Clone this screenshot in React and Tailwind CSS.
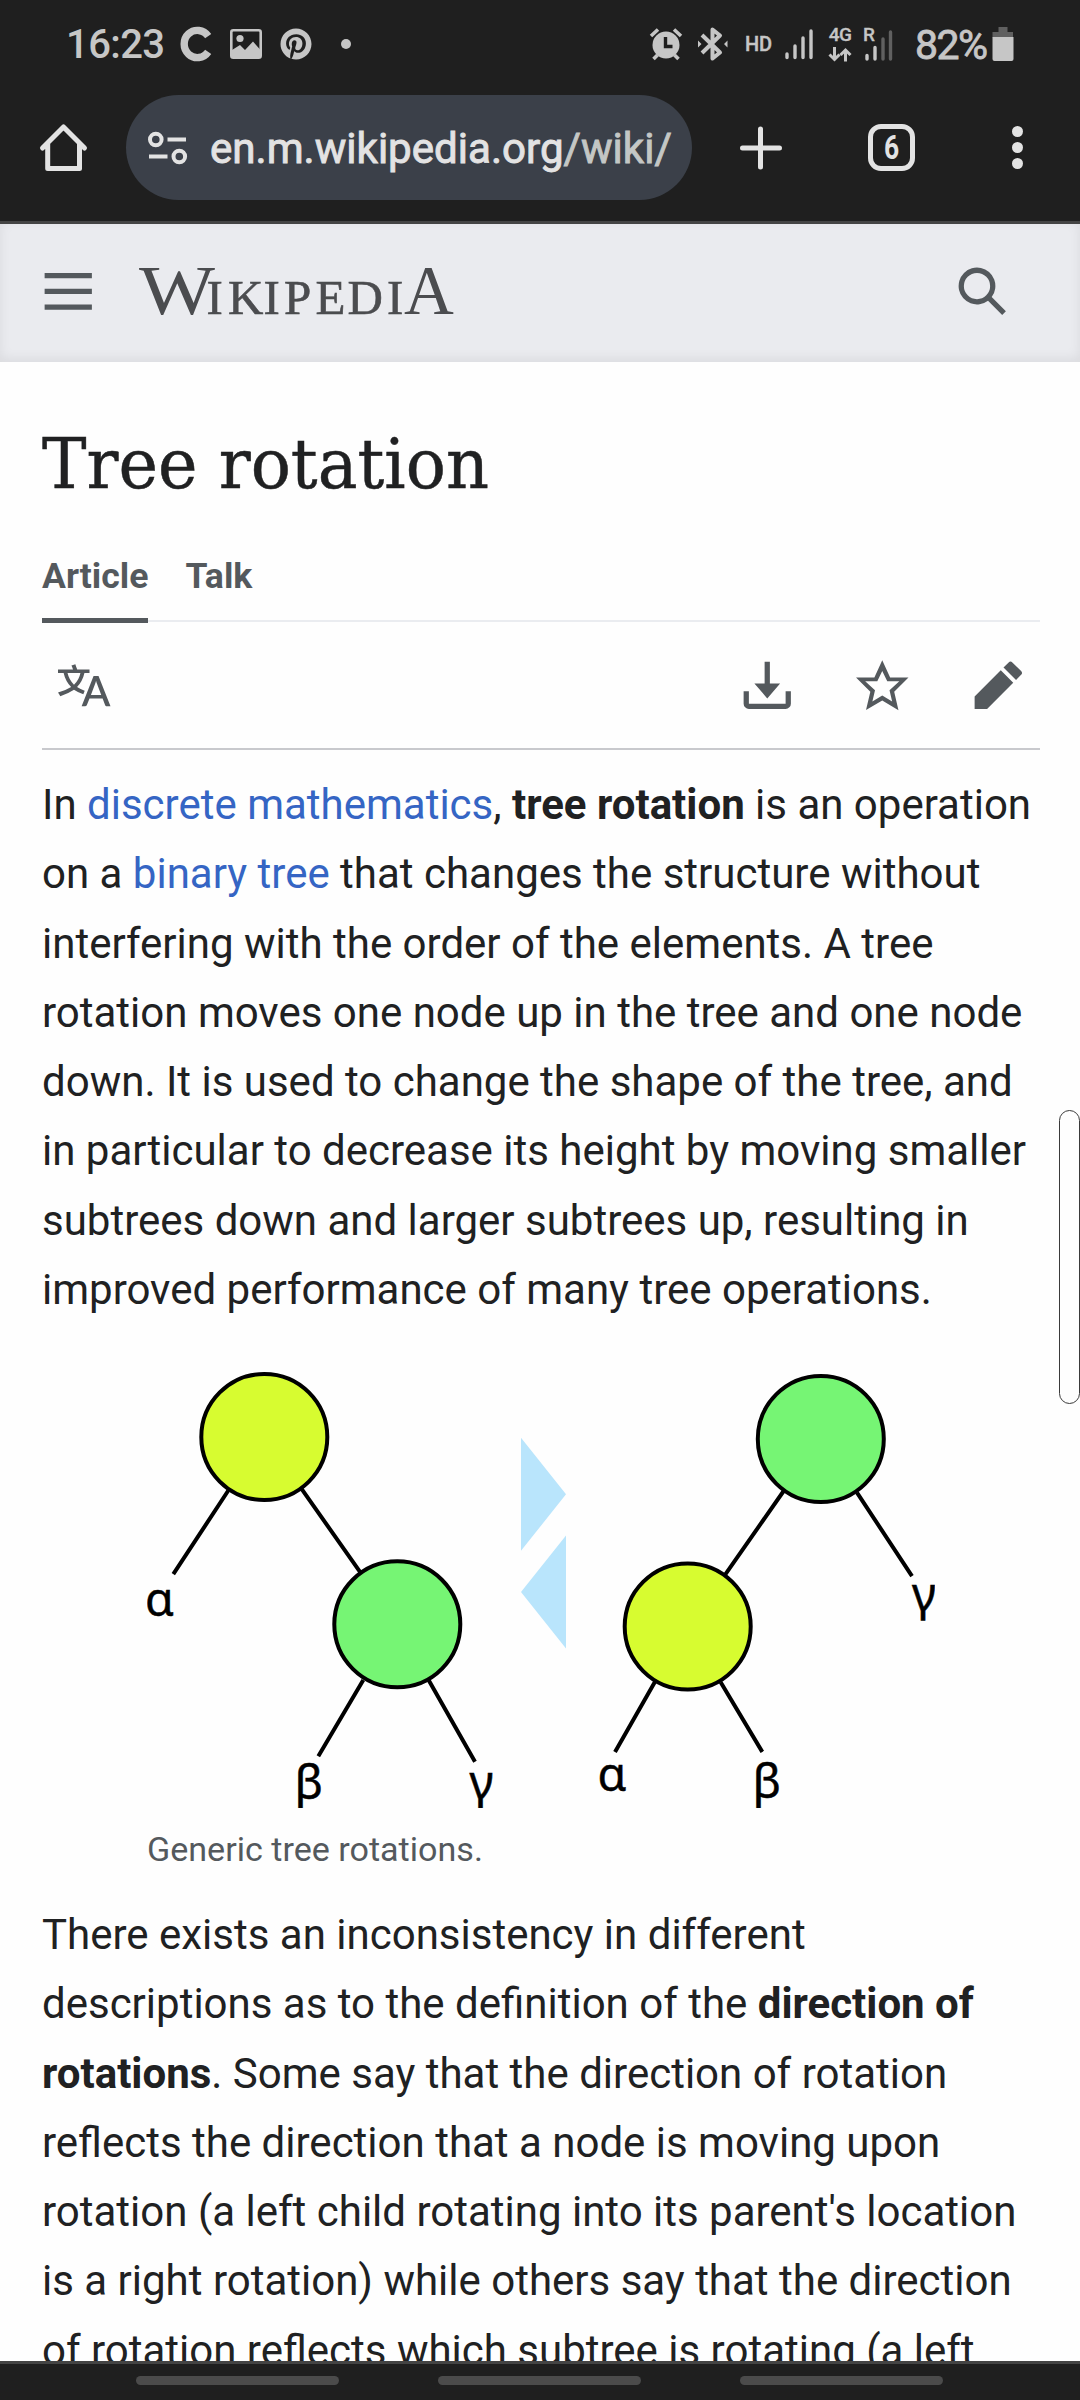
import React from "react";
import { FaPinterest } from "react-icons/fa";

function StatusBar() {
  return (
    <div className="flex h-[88px] shrink-0 items-center text-[#c6c6c6]">
      <div className="ml-[66px] w-[96px] whitespace-nowrap pt-[2px] text-[40px] leading-[48px] font-medium tracking-[-0.6px]">16:23</div>
      <svg className="ml-[17px] h-[36px] w-[34px]" viewBox="0 0 34 36" fill="none">
        <path d="M29.2 10.2A13.2 13.6 0 1 0 29.2 25.8" stroke="currentColor" strokeWidth="7.4" />
      </svg>
      <svg className="ml-[17px] h-[30px] w-[32px]" viewBox="0 0 32 30">
        <rect x="1.3" y="1.3" width="29.4" height="27.4" rx="2" fill="none" stroke="currentColor" strokeWidth="2.6" />
        <circle cx="10" cy="9.5" r="3.6" fill="currentColor" />
        <path d="M2 21l8-5 5 5 8-8.500 8 9V28H2z" fill="currentColor" />
      </svg>
      <FaPinterest className="ml-[18px] size-[32px]" />
      <div className="ml-[29px] size-[10px] rounded-full bg-[#c6c6c6]" />
      <svg className="ml-[298px] h-[34px] w-[34px]" viewBox="0 0 34 34" fill="none" stroke="currentColor">
        <circle cx="17" cy="18" r="13.500" fill="currentColor" stroke="none" />
        <path d="M2 9l7-6.500M32 9l-7-6.500" strokeWidth="3.600" />
        <path d="M4.500 32l4-4M29.500 32l-4-4" strokeWidth="3.600" />
        <path d="M16.500 10v9.500h7" stroke="#1f1f1f" strokeWidth="3.400" />
      </svg>
      <svg className="ml-[14px] h-[36px] w-[32px]" viewBox="0 0 32 36" fill="none" stroke="currentColor" strokeWidth="4">
        <path d="M5 9l18 17.500-7.500 6v-29L23 9.500 5 27" strokeLinejoin="round" />
        <path d="M1 14.500L4.500 18l-3.500 3.500zM30.500 14.500L27 18l3.500 3.500z" fill="currentColor" stroke="none" />
      </svg>
      <div className="ml-[16px] w-[28px] text-[20px] leading-[26px] font-medium tracking-[-0.2px] [-webkit-text-stroke:0.4px_currentColor]">HD</div>
      <svg className="ml-[12px] h-[32px] w-[28px]" viewBox="0 0 28 32" stroke="currentColor" strokeWidth="3.400" strokeLinecap="round">
        <path d="M2 26v3.500M10 18v11.500M18 10v19.500M26 3v26.500" />
      </svg>
      <div className="ml-[14px] flex w-[26px] flex-col items-center">
        <div className="-mt-[4px] text-[19px] leading-[24px] font-medium tracking-[-0.5px] [-webkit-text-stroke:0.3px_currentColor]">4G</div>
        <svg className="h-[15px] w-[24px]" viewBox="0 0 24 15" fill="none" stroke="currentColor" strokeWidth="3">
          <path d="M6.500 0v12M1.500 7.500l5 5 5-5M17.500 14.500V3M12.500 8l5-5 5 5" />
        </svg>
      </div>
      <svg className="ml-[10px] h-[44px] w-[32px]" viewBox="0 -6 32 44" strokeWidth="3.400" strokeLinecap="round">
        <text x="0" y="12.500" fontSize="19" fontWeight="500" fill="currentColor" stroke="currentColor" style={{ strokeWidth: 0.3 }}>R</text>
        <path d="M4 27.500v3.500M12 19.500v11.500" stroke="currentColor" />
        <path d="M20 11v20M27.500 4v27" stroke="#606060" />
      </svg>
      <div className="ml-[20px] w-[74px] whitespace-nowrap pt-[2px] text-[41px] leading-[48px] tracking-[-1.6px] [-webkit-text-stroke:0.8px_currentColor]">82%</div>
      <svg className="ml-[3px] h-[34px] w-[22px]" viewBox="0 0 22 34">
        <path d="M6.500 0h9v5H21v5.500H0.500V5h6z" fill="#606060" />
        <path d="M0.500 10h21v22a2 2 0 0 1-2 2h-17a2 2 0 0 1-2-2z" fill="currentColor" />
      </svg>
    </div>
  );
}

function BrowserBar() {
  return (
    <div className="flex h-[133px] shrink-0 items-start pt-[7px] text-[#e3e3e3]">
      <svg className="mt-[27px] ml-[38px] h-[52px] w-[52px]" viewBox="0 0 52 52" fill="none" stroke="currentColor" strokeWidth="5" strokeLinecap="round" strokeLinejoin="round">
        <path d="M4.500 26L25.500 5 46.500 26M9.700 22v24.500h31.800V22" />
      </svg>
      <div className="ml-[36px] flex h-[105px] w-[566px] items-center overflow-hidden rounded-full bg-[#3b4049] pr-[20px] pl-[22px]">
        <svg className="h-[34px] w-[40px] shrink-0" viewBox="0 0 40 34" fill="none" stroke="currentColor" strokeWidth="4">
          <circle cx="7.800" cy="8.500" r="5.800" />
          <path d="M19.500 8.500H38M1 25.500h18.500" />
          <circle cx="31.300" cy="25.500" r="5.800" />
        </svg>
        <div className="ml-[22px] flex-1 overflow-hidden pt-[3px] text-[42.1px] leading-[60px] whitespace-nowrap [-webkit-text-stroke:0.9px_currentColor]">
          en.m.wikipedia.org<span className="text-[#c4c7c5]">/wiki/</span>
        </div>
      </div>
      <svg className="mt-[31px] ml-[47px] size-[44px]" viewBox="0 0 44 44" stroke="currentColor" strokeWidth="5" strokeLinecap="round">
        <path d="M21.500 3v38M3.500 22h37" />
      </svg>
      <div className="mt-[29px] ml-[85px] flex size-[47px] items-center justify-center rounded-[13px] border-5 border-[#e3e3e3] text-[33px] leading-none font-bold">
        <span className="scale-x-80">6</span>
      </div>
      <div className="mt-[31px] ml-[97px] flex flex-col gap-[5px]">
        <div className="size-[11px] rounded-full bg-[#e3e3e3]" />
        <div className="size-[11px] rounded-full bg-[#e3e3e3]" />
        <div className="size-[11px] rounded-full bg-[#e3e3e3]" />
      </div>
    </div>
  );
}

function Icon({ className, children }) {
  return (
    <svg className={className} viewBox="0 0 20 20" fill="currentColor">
      {children}
    </svg>
  );
}

function WikiHeader() {
  return (
    <header className="flex h-[138px] shrink-0 items-start bg-[#eaebef] text-[#54595d] shadow-[inset_0_-3px_12px_rgba(0,0,0,0.07)]">
      <Icon className="mt-[41px] ml-[42px] size-[52.5px]">
        <path d="M1 3v2h18V3zm0 8h18V9H1zm0 6h18v-2H1z" />
      </Icon>
      <svg className="mt-[16px] ml-[40px] h-[100px] w-[326px]" viewBox="0 -20 326 100" fill="#4b4c4f" fontFamily="'Liberation Serif', serif">
        <text x="4" y="53.500" fontSize="69" textLength="76" lengthAdjust="spacingAndGlyphs">W</text>
        <text x="71.500 93 128.500 149 180.500 212.500 252" y="53.500" fontSize="49" stroke="#4b4c4f" strokeWidth="0.6">IKIPEDI</text>
        <text x="269" y="53.500" fontSize="69">A</text>
      </svg>
      <Icon className="mt-[41px] mr-[72px] ml-auto size-[52.5px]">
        <path d="M12.200 13.600a7 7 0 1 1 1.400-1.400l5.400 5.400-1.400 1.400zM3 8a5 5 0 1 0 10 0A5 5 0 0 0 3 8" />
      </Icon>
    </header>
  );
}

function PageActions() {
  return (
    <div className="flex h-[128px] items-start border-b-2 border-[#c8c9cd] pt-[36.5px] text-[#54595d]">
      <Icon className="ml-[16px] size-[52.5px]">
        <path d="M20 18h-1.440a.6.6 0 0 1-.4-.12.8.8 0 0 1-.23-.31L17 15h-5l-1 2.540a.8.8 0 0 1-.22.3.6.6 0 0 1-.4.14H9l4.550-11.470h1.890zm-3.530-4.310L14.890 9.500a12 12 0 0 1-.39-1.240q-.09.37-.19.69l-.19.56-1.580 4.190zm-6.300-1.580a13.400 13.400 0 0 1-2.910-1.410 11.460 11.460 0 0 0 2.810-5.370H12V4H7.310a4 4 0 0 0-.2-.56C6.870 2.790 6.600 2 6.600 2l-1.470.5s.4.89.6 1.500H0v1.330h2.150A11.230 11.230 0 0 0 5 10.700a17.200 17.200 0 0 1-5 2.100q.56.82.87 1.380a23.300 23.300 0 0 0 5.220-2.510 15.600 15.600 0 0 0 3.560 1.770zM3.630 5.330h4.910a8.100 8.100 0 0 1-2.450 4.450 9.100 9.100 0 0 1-2.460-4.450" />
      </Icon>
      <Icon className="ml-auto size-[52.5px]">
        <path d="M17 12.300V17H3v-4.700H1V17a2 2 0 0 0 2 2h14a2 2 0 0 0 2-2v-4.700z" />
        <path d="M10 15l4.900-5.700H11V1H9v8.300H5.100z" />
      </Icon>
      <Icon className="ml-[63px] size-[52.5px]">
        <path d="M20 7h-7L10 .5 7 7H0l5.460 5.470-1.640 7 6.180-3.700 6.180 3.730-1.630-7zm-10 6.900-3.760 2.270 1-4.280L3.500 8.500h4.610L10 4.600l1.900 3.900h4.600l-3.730 3.400 1 4.280z" />
      </Icon>
      <Icon className="mr-[16px] ml-[63px] size-[52.5px]">
        <path d="m16.770 8 1.940-2a1 1 0 0 0 0-1.410l-3.340-3.300a1 1 0 0 0-1.410 0L12 3.230zM1 14.250V19h4.750l9.960-9.960-4.750-4.750z" />
      </Icon>
    </div>
  );
}

function RotationDiagram() {
  return (
    <svg className="block h-[450px] w-[788px]" viewBox="147 1358 788 450" fill="none" stroke="#000" strokeWidth="4">
      <path d="M228.300 1490.500L173.300 1574.200M300.700 1487.700L360.700 1572.800M363.300 1679.900L318.300 1756.300M428.300 1679.500L475 1761.800" />
      <path d="M784 1490.500L725 1574.900M857 1492.600L912 1576.200M655.700 1680.600L615 1751.900M720.700 1682.300L762.300 1751.900" />
      <g fill="#d7fc30">
        <circle cx="264.300" cy="1437" r="63" />
        <circle cx="687.700" cy="1626.500" r="63" />
      </g>
      <g fill="#76f574">
        <circle cx="397.300" cy="1624.300" r="63" />
        <circle cx="820.800" cy="1439" r="63" />
      </g>
      <path d="M521 1437.800L566 1494.300L521 1550.800zM566 1535.600L521 1592.100L566 1648.600z" fill="#b9e5fc" stroke="none" />
      <g fill="#000" strokeWidth="0.5" fontSize="46.5" fontFamily="'Noto Sans', sans-serif">
        <text x="145" y="1615.500">α</text>
        <text x="294.500" y="1798.500">β</text>
        <text x="469.500" y="1798.500">γ</text>
        <text x="597.500" y="1790.500">α</text>
        <text x="752.500" y="1797.500">β</text>
        <text x="912" y="1611">γ</text>
      </g>
    </svg>
  );
}

export default function App() {
  return (
    <div className="relative flex h-[2400px] w-[1080px] flex-col overflow-hidden bg-[#1f1f1f] font-['Roboto',sans-serif]">
      <StatusBar />
      <BrowserBar />
      <div className="h-[3px] shrink-0 bg-[#444444]" />
      <WikiHeader />
      <main className="min-h-0 flex-1 overflow-hidden bg-[#fefefe] px-[42px] pr-[40px] text-[#202122]">
        <h1 className="mt-[54px] h-[96px] origin-left scale-x-[0.954] whitespace-nowrap font-['DejaVu_Serif',serif] text-[70px] leading-[96px] [-webkit-text-stroke:0.5px_currentColor]">
          Tree rotation
        </h1>
        <nav className="mt-[34px] flex h-[76px] items-end gap-[37px] text-[35.6px] leading-[40px] font-bold text-[#54595d] shadow-[inset_0_-2px_0_#eaecf0]">
          <div className="-mb-px h-[67px] border-b-5 border-[#54595d]">Article</div>
          <div className="-mb-px h-[67px]">Talk</div>
        </nav>
        <PageActions />
        <p className="mt-[20px] text-[42px] leading-[69.3px] whitespace-nowrap">
          In <a className="text-[#3565c4]">discrete mathematics</a>, <b>tree rotation</b> is an operation<br />
          on a <a className="text-[#3565c4]">binary tree</a> that changes the structure without<br />
          interfering with the order of the elements. A tree<br />
          rotation moves one node up in the tree and one node<br />
          down. It is used to change the shape of the tree, and<br />
          in particular to decrease its height by moving smaller<br />
          subtrees down and larger subtrees up, resulting in<br />
          improved performance of many tree operations.
        </p>
        <figure className="mt-[33.600px] ml-[105px] h-[508px]">
          <RotationDiagram />
          <figcaption className="mt-[17px] text-[34.1px] leading-[48px] text-[#54595d]">Generic tree rotations.</figcaption>
        </figure>
        <p className="mt-[34px] text-[42px] leading-[69.3px] whitespace-nowrap">
          There exists an inconsistency in different<br />
          descriptions as to the definition of the <b>direction of</b><br />
          <b>rotations</b>. Some say that the direction of rotation<br />
          reflects the direction that a node is moving upon<br />
          rotation (a left child rotating into its parent's location<br />
          is a right rotation) while others say that the direction<br />
          of rotation reflects which subtree is rotating (a left
        </p>
      </main>
      <div className="h-[3px] shrink-0 bg-[#444444]" />
      <div className="flex h-[36px] shrink-0 gap-[99px] pt-[12px] pl-[136px]">
        <div className="h-[9px] w-[203px] rounded-full bg-[#4b4b4b]" />
        <div className="h-[9px] w-[203px] rounded-full bg-[#4b4b4b]" />
        <div className="h-[9px] w-[203px] rounded-full bg-[#4b4b4b]" />
      </div>
      <div className="absolute top-[1110px] right-0 h-[294px] w-[21px] rounded-[10.5px] border border-[#3a3a3a] bg-[#fefefe]" />
    </div>
  );
}
